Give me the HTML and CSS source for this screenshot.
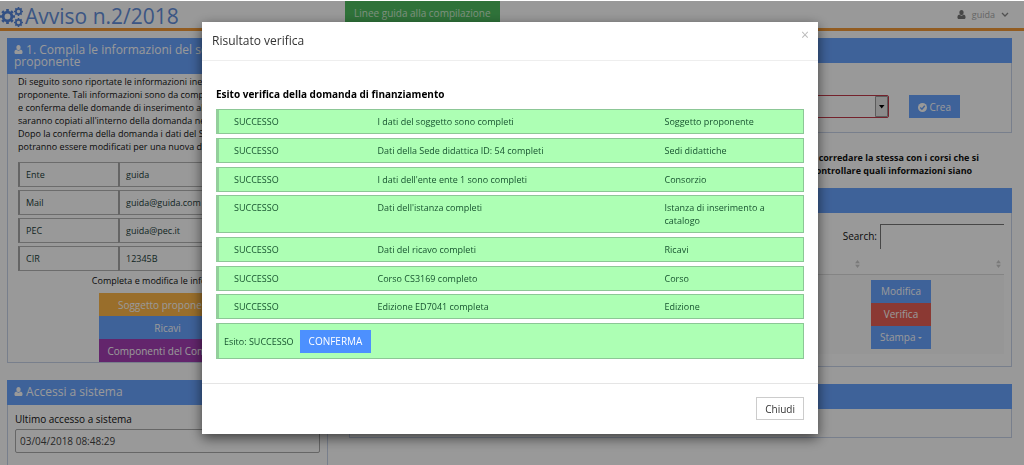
FILE: index.html
```html
<!DOCTYPE html>
<html lang="it">
<head>
<meta charset="utf-8">
<title>Avviso n.2/2018</title>
<link rel="stylesheet" href="styles.css">
</head>
<body>
<svg class="symbols" aria-hidden="true">
  <symbol id="user" viewBox="0 0 16 16"><path d="M8 0C5.500 0 4.200 1.800 4.200 4.300S5.800 9 8 9s3.800-2.200 3.800-4.700S10.500 0 8 0zM4.200 8C1.500 8.600.8 10.800.8 13.300.8 15 1.800 16 3.300 16h9.400c1.500 0 2.500-1 2.500-2.700 0-2.500-.7-4.700-3.400-5.300C10.800 9.300 9.500 10 8 10S5.200 9.300 4.200 8z"/></symbol>
  <symbol id="cog" viewBox="-10 -10 20 20"><circle r="5.800" fill="none" stroke="currentColor" stroke-width="3.800"/><g stroke="currentColor" stroke-width="3.600"><path d="M0-10V-6M0 10V6M-10 0H-6M10 0H6M-7-7l2.500 2.500M7 7L4.500 4.500M-7 7l2.500-2.500M7-7L4.500-4.500"/></g></symbol>
</svg>
<header class="topbar">
  <h1 class="brand">
    <svg class="brand-icon" viewBox="0 0 24 22" aria-hidden="true"><use href="#cog" x="0" y="3" width="15" height="15"/><use href="#cog" x="14" y="1" width="9" height="9"/><use href="#cog" x="14" y="12" width="9" height="9"/></svg>
    Avviso n.2/2018
  </h1>
  <a class="guide" href="#">Linee guida alla compilazione</a>
  <button class="account" type="button">
    <svg class="icon" aria-hidden="true"><use href="#user"/></svg>guida
    <svg class="chevron" viewBox="0 0 8 6" aria-hidden="true"><path d="M1 1l3 3 3-3" fill="none" stroke="currentColor" stroke-width="1.300"/></svg>
  </button>
</header>
<main class="columns">
  <div class="side">
    <section class="panel">
      <h2 class="panel-title"><svg class="icon" aria-hidden="true"><use href="#user"/></svg> 1. Compila le informazioni del soggetto proponente</h2>
      <div class="panel-body intro-body">
        <p class="intro">Di seguito sono riportate le informazioni inerenti al soggetto<br>proponente. Tali informazioni sono da compilare<br>e conferma delle domande di inserimento al catalogo<br>saranno copiati all'interno della domanda nel momento<br>Dopo la conferma della domanda i dati del Soggetto<br>potranno essere modificati per una nuova domanda.</p>
        <table class="facts">
          <tr><th scope="row">Ente</th><td>guida</td></tr>
          <tr><th scope="row">Mail</th><td>guida@guida.com</td></tr>
          <tr><th scope="row">PEC</th><td>guida@pec.it</td></tr>
          <tr><th scope="row">CIR</th><td>12345B</td></tr>
        </table>
        <p class="hint">Completa e modifica le informazioni</p>
        <div class="stack">
          <button class="btn amber" type="button">Soggetto proponente</button>
          <button class="btn" type="button">Ricavi</button>
          <button class="btn purple" type="button">Componenti del Consorzio</button>
        </div>
      </div>
    </section>
    <section class="panel">
      <h2 class="panel-title"><svg class="icon" aria-hidden="true"><use href="#user"/></svg> Accessi a sistema</h2>
      <div class="panel-body access">
        <label for="last">Ultimo accesso a sistema</label>
        <input id="last" type="text" value="03/04/2018 08:48:29" readonly>
      </div>
    </section>
  </div>
  <div class="content">
    <section class="panel">
      <div class="panel-title"></div>
      <div class="panel-body create">
        <div class="choice">
          <select aria-label="Domanda"><option></option></select>
          <svg class="choice-arrow" viewBox="0 0 13 21" aria-hidden="true"><path class="choice-box" d="M.5.500h12v20H.5z"/><path d="M4 9h5.500L6.700 12.500z"/></svg>
        </div>
        <button class="btn" type="button"><svg class="icon" viewBox="0 0 16 16" aria-hidden="true"><circle cx="8" cy="8" r="8"/><path class="tick" d="M4 8l3 3 5-6"/></svg> Crea</button>
      </div>
    </section>
    <p class="notice">e corredare la stessa con i corsi che si<br>controllare quali informazioni siano</p>
    <section class="panel">
      <div class="panel-title"></div>
      <div class="panel-body listing">
        <div class="search"><label for="search">Search:</label><input id="search" type="text"></div>
        <table class="grid">
          <thead><tr>
            <th><svg class="sort" viewBox="0 0 6 10"><path d="M0 4l3-4 3 4zM0 6l3 4 3-4z"/></svg></th>
            <th class="actions"><svg class="sort" viewBox="0 0 6 10"><path d="M0 4l3-4 3 4zM0 6l3 4 3-4z"/></svg></th>
          </tr></thead>
          <tbody><tr><td></td><td class="actions"><div class="stack">
            <button class="btn" type="button">Modifica</button>
            <button class="btn red" type="button">Verifica</button>
            <button class="btn" type="button">Stampa <span class="caret"></span></button>
          </div></td></tr></tbody>
        </table>
      </div>
    </section>
    <section class="panel">
      <div class="panel-title"></div>
      <div class="panel-body short"></div>
    </section>
  </div>
</main>
<div class="backdrop">
  <div class="modal" role="dialog" aria-modal="true" aria-labelledby="modal-title">
    <div class="modal-head"><h2 id="modal-title">Risultato verifica</h2><button class="close" type="button" aria-label="Chiudi finestra">×</button></div>
    <div class="modal-body">
      <h3>Esito verifica della domanda di finanziamento</h3>
      <ul class="results">
        <li><span>SUCCESSO</span><span>I dati del soggetto sono completi</span><span>Soggetto proponente</span></li>
        <li><span>SUCCESSO</span><span>Dati della Sede didattica ID: 54 completi</span><span>Sedi didattiche</span></li>
        <li><span>SUCCESSO</span><span>I dati dell'ente ente 1 sono completi</span><span>Consorzio</span></li>
        <li><span>SUCCESSO</span><span>Dati dell'istanza completi</span><span>Istanza di inserimento a catalogo</span></li>
        <li><span>SUCCESSO</span><span>Dati del ricavo completi</span><span>Ricavi</span></li>
        <li><span>SUCCESSO</span><span>Corso CS3169 completo</span><span>Corso</span></li>
        <li><span>SUCCESSO</span><span>Edizione ED7041 completa</span><span>Edizione</span></li>
      </ul>
      <div class="outcome"><span>Esito: SUCCESSO</span><button class="btn confirm" type="button">CONFERMA</button></div>
    </div>
    <div class="modal-foot"><button class="btn plain" type="button">Chiudi</button></div>
  </div>
</div>
</body>
</html>
```
FILE: styles.css
```css
* { box-sizing: border-box; }
html, body { height: 100%; overflow: hidden; }
body { margin: 0; background: #fff; color: #111; font: 9px/13px "Open Sans", sans-serif; }
h1, h2, h3, p, ul { margin: 0; padding: 0; }
button, input, select { font: inherit; color: inherit; border-radius: 0; margin: 0; }
.symbols { position: absolute; width: 0; height: 0; }
.icon { width: 9px; height: 9px; fill: currentColor; }
.topbar { display: flex; align-items: center; height: 31px; padding: 1px 15px 0 0; border-bottom: 3px solid #f49a37; }
.brand { display: flex; align-items: center; gap: 1px; flex: 0 0 345px; font-size: 21px; line-height: 27px; font-weight: 400; color: #6490dc; padding-top: 4px; }
.brand-icon { width: 24px; height: 22px; color: #5586dc; }
.guide { align-self: flex-start; padding: 5px 9px; background: #4fbf60; color: #d2f0d4; font-size: 10px; text-decoration: none; line-height: 14px; }
.account { display: flex; align-items: center; gap: 6px; margin-left: auto; border: 0; padding: 0; background: none; color: #aaa; line-height: 14px; }
.account .icon { color: #777; }
.chevron { width: 8px; height: 6px; color: #888; }
.columns { display: flex; gap: 21px; padding: 7px 12px 0 7px; }
.side { flex: 0 0 321px; }
.content { flex: 1; min-width: 0; }
.panel { border: 1px solid #c9d4ea; border-top: 0; margin-bottom: 17px; }
.panel-title { margin: 0 -1px; min-height: 25px; padding: 6px 7px; background: #68a3ff; color: #fff; font-size: 12px; line-height: 12px; font-weight: 400; }
.side .panel-title { padding-right: 80px; }
.intro-body { padding: 1px 10px 0; }
.intro { white-space: nowrap; overflow: hidden; }
.facts { width: 100%; margin-top: 6px; border-spacing: 0 3px; color: #1b403a; }
.facts th, .facts td { border: 1px solid #b4b4b4; border-left: 2px solid #a8a8a8; padding: 5px 6px; line-height: 13px; text-align: left; font-weight: 400; }
.facts th { width: 100px; border-right: 0; }
.hint { text-align: center; margin-bottom: 6px; }
.stack { display: flex; flex-direction: column; width: 138px; margin: 0 auto; }
.btn { border: 0; height: 23px; padding: 0 9px; background: #68a3ff; color: #fff; font-size: 10px; line-height: 14px; white-space: nowrap; }
.amber { background: #ffb848; }
.purple { background: #a53fb5; }
.red { background: #e85f55; }
.access { padding: 8px 7px 24px; font-size: 10px; }
.access label { display: block; margin-bottom: 3px; }
.access input { display: block; width: 100%; height: 24px; padding: 0 4px; border: 1px solid #aaa; border-radius: 2px; background: transparent; color: #444; }
.create { display: flex; align-items: flex-start; justify-content: flex-end; gap: 20px; height: 69px; padding: 32px 51px 0 0; }
.choice { position: relative; width: 360px; height: 23px; }
.choice select { width: 100%; height: 100%; border: 1px solid #c23a4a; border-radius: 2px; appearance: none; background: #fff; }
.choice-arrow { position: absolute; right: 1px; top: 1px; width: 13px; height: 21px; pointer-events: none; }
.choice-box { fill: #e8e8e8; stroke: #999; }
.create .icon { vertical-align: -1px; }
.tick { fill: none; stroke: #68a3ff; stroke-width: 2.500; }
.notice { margin: 18px 0 11px; padding-left: 462px; white-space: nowrap; font-weight: 700; }
.listing { padding: 11px 7px 12px; }
.search { display: flex; justify-content: flex-end; align-items: center; gap: 3px; }
.search input { width: 124px; height: 25px; border: 0; border-top: 1px solid #777; border-left: 1px solid #777; background: transparent; }
.search label { font-size: 10px; }
.grid { width: 100%; border-collapse: collapse; }
.grid th { height: 25px; padding: 0 3px; text-align: right; border-bottom: 1px solid #ddd; }
.grid td { padding: 5px 8px; background: #fbfbfb; }
.grid .actions { width: 141px; }
.grid .stack { width: 60px; margin: 0; }
.sort { width: 5px; height: 8px; fill: #ccc; vertical-align: bottom; }
.caret { display: inline-block; border: 2px solid transparent; border-top-color: #fff; border-bottom: 0; vertical-align: middle; }
.short { height: 28px; }
.backdrop { position: fixed; inset: 1px 0 0; padding: 21px 4px 0 0; background: rgba(0, 0, 0, .4); }
.modal { width: 616px; max-width: 100%; margin: 0 auto; background: #fff; box-shadow: 0 4px 12px rgba(0, 0, 0, .6); }
.modal-head { display: flex; align-items: center; justify-content: space-between; height: 39px; padding: 0 9px 0 10px; border-bottom: 1px solid #eee; }
.modal-head h2 { font-size: 12px; line-height: 16px; font-weight: 400; color: #333; }
.close { border: 0; padding: 0; background: none; color: #bbb; font-size: 14px; line-height: 16px; margin-bottom: 12px; }
.modal-body { padding: 27px 14px 24px; }
.modal-body h3 { font-size: 10px; line-height: 13px; color: #000; margin-bottom: 8px; }
.results { list-style: none; }
.results li { display: grid; grid-template-columns: 1fr 2fr 1fr; margin-bottom: 4px; padding: 5px 10px 5px 0; }
.results li:nth-child(3n) { margin-bottom: 3px; }
.results li, .outcome { border: 1px solid #8cc796; border-left: 3px solid #93cf9b; background: #adffb4; color: #17532f; }
.results span { padding: 0 7px 0 15px; }
.outcome { display: flex; align-items: center; gap: 6px; min-height: 36px; padding: 5px; }
.btn.confirm { background: #4d90fe; }
.modal-foot { display: flex; justify-content: flex-end; padding: 13px 14px 14px; border-top: 1px solid #e5e5e5; }
.btn.plain { background: #fff; border: 1px solid #ccc; color: #333; padding: 0 8px; }
```
